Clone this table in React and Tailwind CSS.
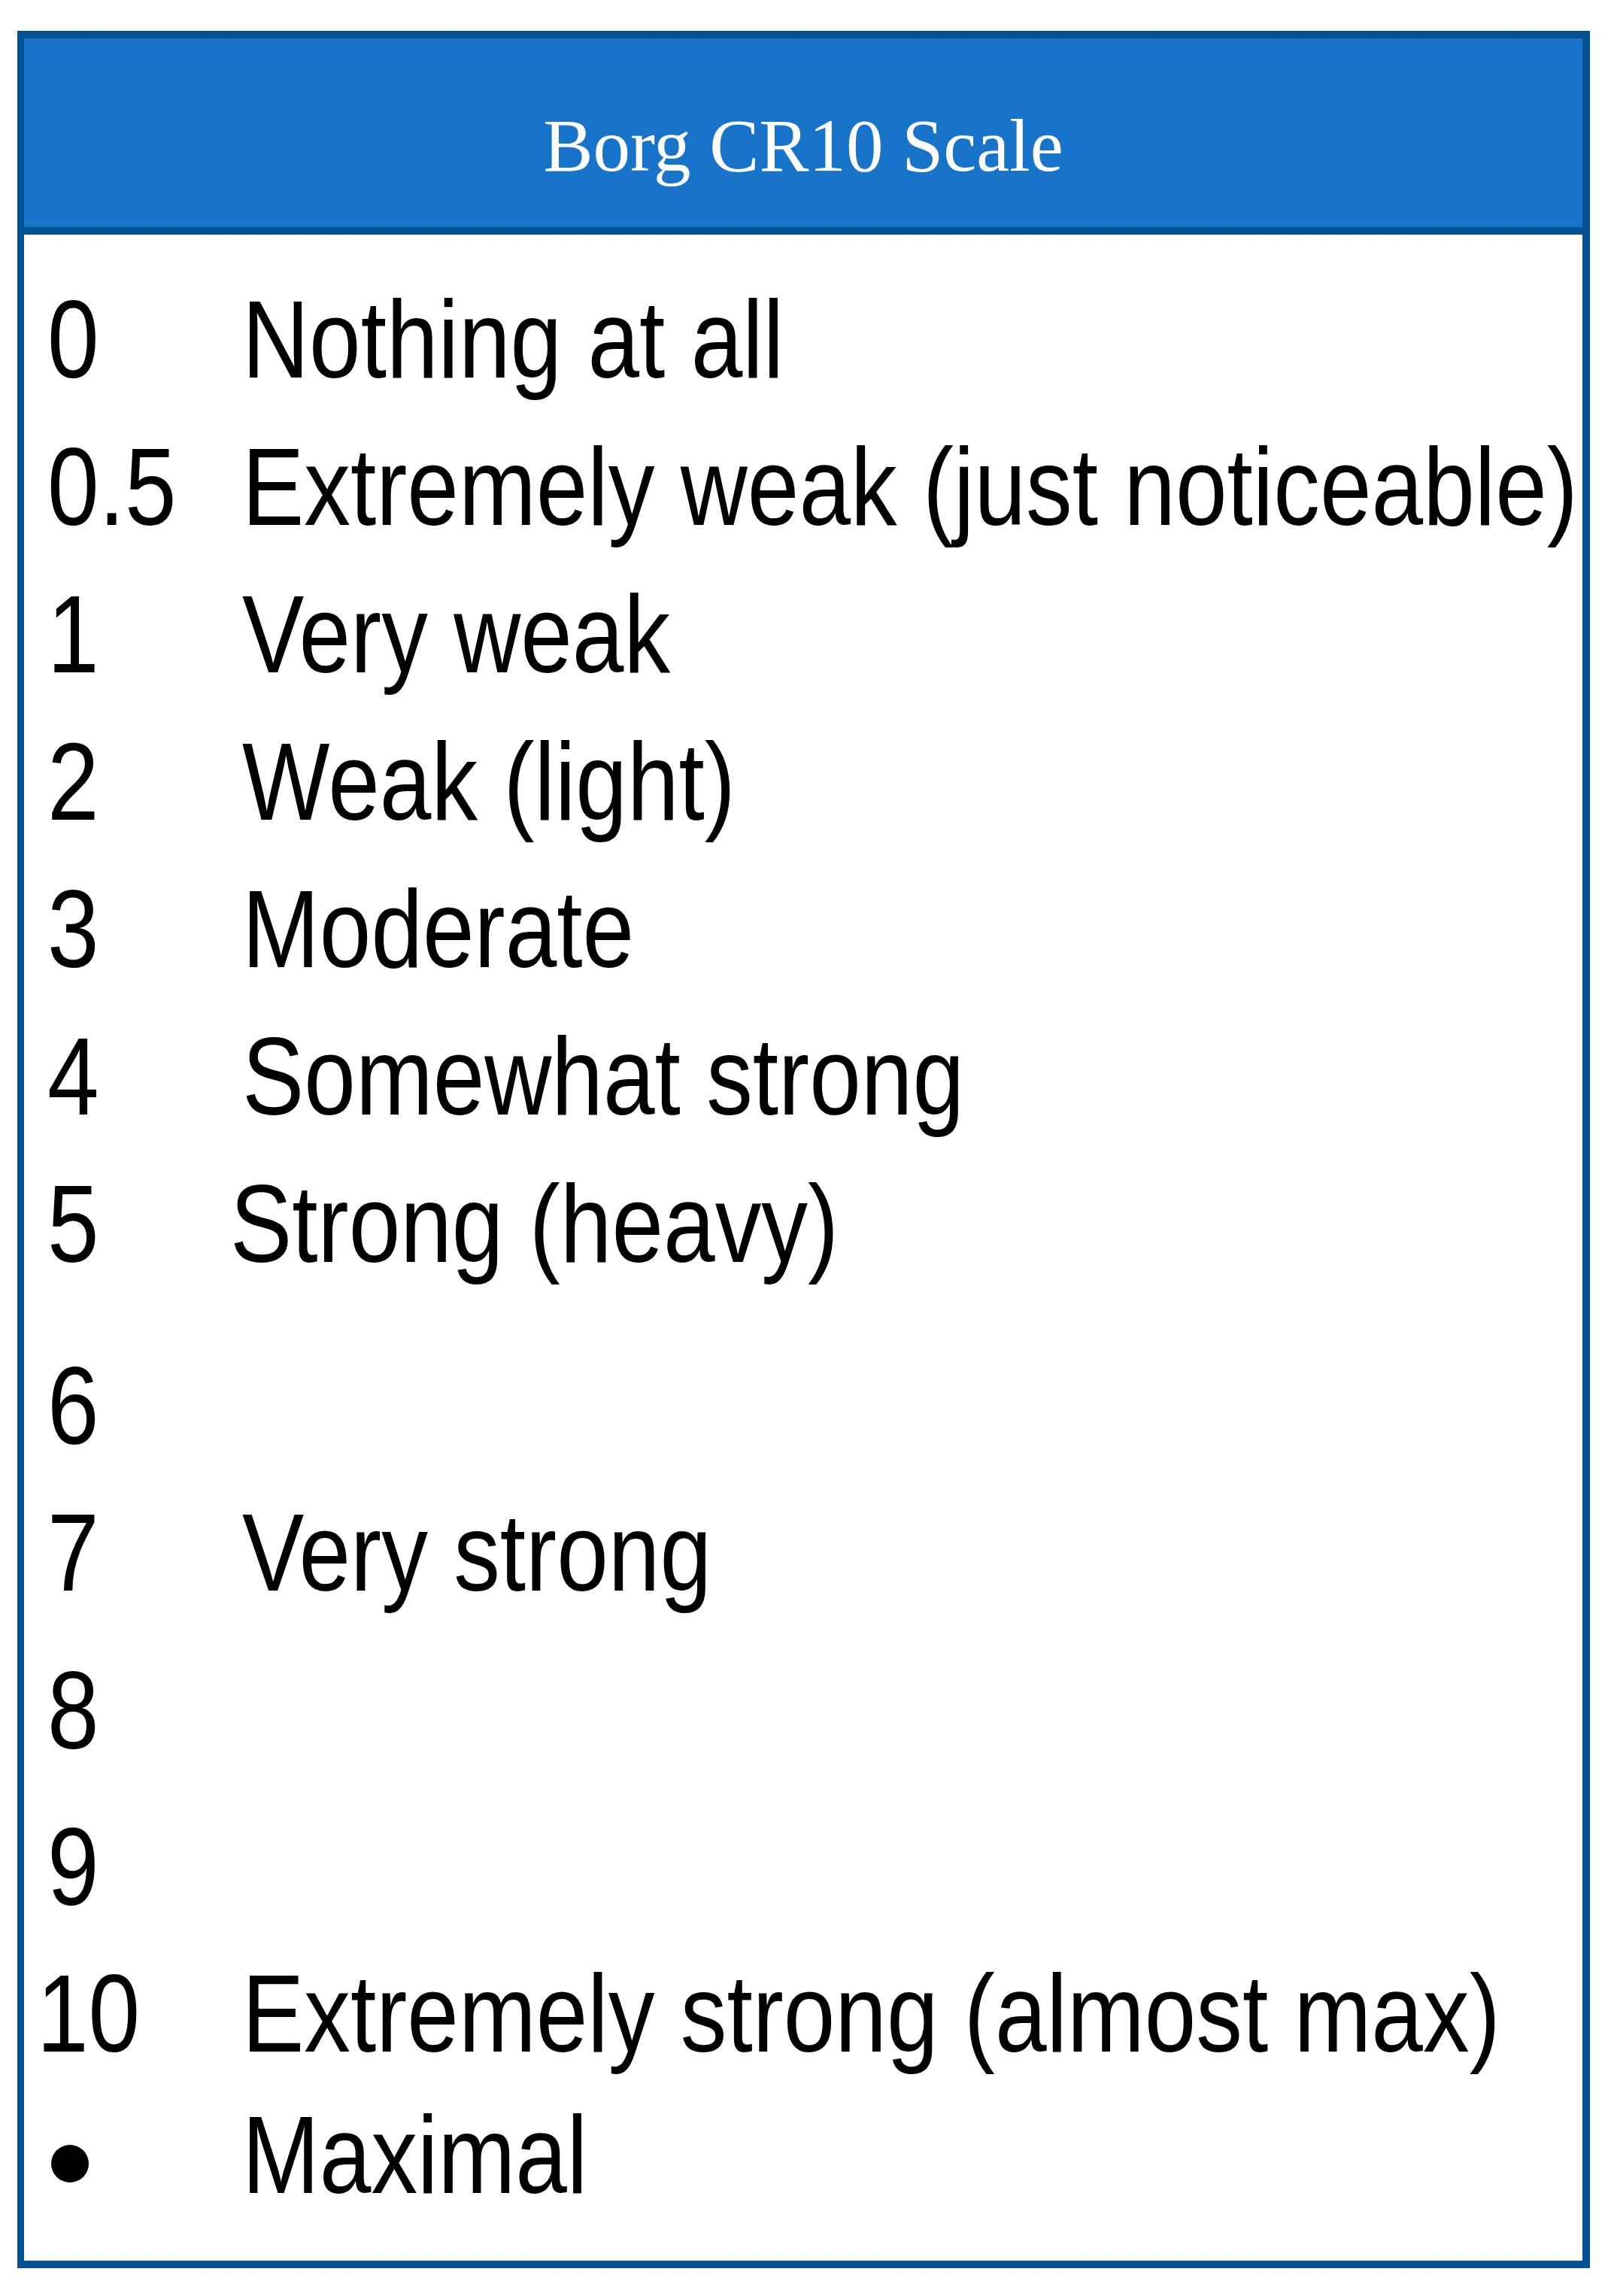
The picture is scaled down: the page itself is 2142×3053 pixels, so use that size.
import React from 'react';

const rows = [
  { n: '0', label: 'Nothing at all', h: 'h-[196px]' },
  { n: '0.5', label: 'Extremely weak (just noticeable)', h: 'h-[196px]' },
  { n: '1', label: 'Very weak', h: 'h-[196px]' },
  { n: '2', label: 'Weak (light)', h: 'h-[196px]' },
  { n: '3', label: 'Moderate', h: 'h-[196px]' },
  { n: '4', label: 'Somewhat strong', h: 'h-[196px]' },
  { n: '5', label: 'Strong (heavy)', h: 'h-[242px]', labelShift: '-ml-[16px]' },
  { n: '6', label: '', h: 'h-[195px]' },
  { n: '7', label: 'Very strong', h: 'h-[210px]' },
  { n: '8', label: '', h: 'h-[208px]' },
  { n: '9', label: '', h: 'h-[195px]' },
  { n: '10', label: 'Extremely strong (almost max)', h: 'h-[188px]', numShift: '-ml-[14px]' },
  { n: '•', label: 'Maximal', h: 'h-[196px]', bullet: true },
];

function Row({ row }) {
  return (
    <div className={`flex items-start ${row.h}`}>
      <div className="w-[259px] shrink-0">
        {row.bullet ? (
          // big round marker for the "maximal" line
          <div className="ml-[5px] mt-[84px] w-[50px] h-[50px] rounded-full bg-black" aria-label="•" />
        ) : (
          <span className={`inline-block origin-left scale-x-[0.845] whitespace-nowrap ${row.numShift || ''}`}>
            {row.n}
          </span>
        )}
      </div>
      {row.label && (
        <span className={`inline-block origin-left scale-x-[0.845] whitespace-nowrap ${row.labelShift || ''}`}>
          {row.label}
        </span>
      )}
    </div>
  );
}

export default function App() {
  return (
    <div className="w-[2142px] h-[3053px] bg-white pt-[41px] pl-[23px]">
      <div className="w-[2091px] h-[2975px] border-[10px] border-l-[9px] border-[#045294] bg-white overflow-hidden">
        {/* Title bar */}
        <div className="h-[261px] bg-[#1874c9] border-b-[10px] border-[#045294] pt-[93px] text-center">
          <h1 className="font-['Liberation_Serif','Times_New_Roman',serif] text-[99px] leading-none text-white font-normal">
            Borg CR10 Scale
          </h1>
        </div>

        {/* Scale rows */}
        <div className="pt-[42px] pl-[31px] font-['Liberation_Sans',Arial,sans-serif] text-[146px] leading-[196px] text-black">
          {rows.map((row) => (
            <Row key={row.n} row={row} />
          ))}
        </div>
      </div>
    </div>
  );
}
